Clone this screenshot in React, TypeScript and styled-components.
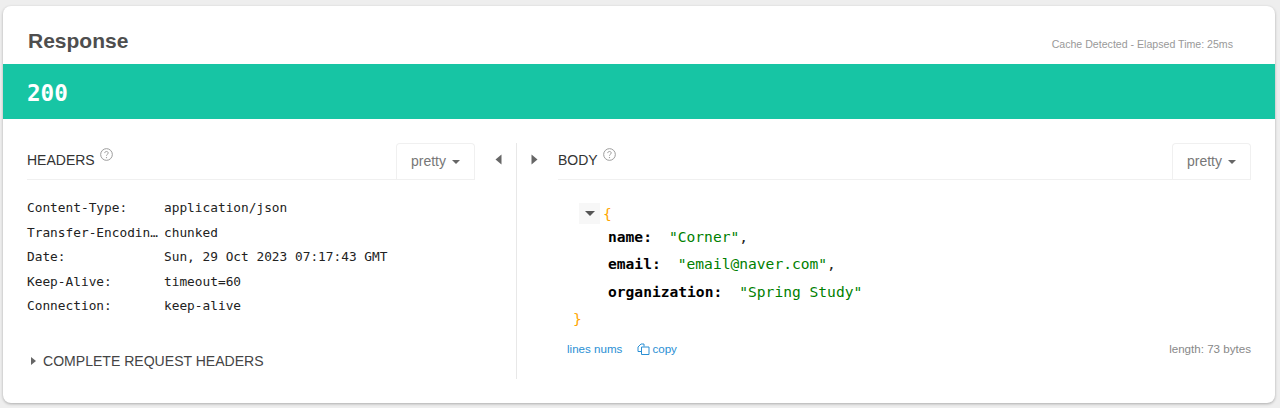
import { Fragment } from 'react'
import styled, { createGlobalStyle } from 'styled-components'

const mono = '"DejaVu Sans Mono", "Liberation Mono", monospace'

const GlobalStyle = createGlobalStyle`
  html, body {
    margin: 0;
    padding: 0;
    background: #eeeeee;
    font-family: "Liberation Sans", Arial, sans-serif;
  }
`

const Page = styled.div`
  width: 1280px;
  height: 408px;
  padding: 6px 5px 5px 3px;
  box-sizing: border-box;
  overflow: hidden;
`

const Card = styled.section`
  height: 397px;
  background: #fff;
  border-radius: 8px;
  box-shadow: 0 1px 3px rgba(0, 0, 0, 0.28);
  overflow: hidden;
`

const CardHeader = styled.header`
  height: 58px;
  display: flex;
  justify-content: space-between;
  padding: 0 42px 0 25px;
`

const Title = styled.h2`
  margin: 23px 0 0;
  font-size: 21px;
  line-height: 24px;
  font-weight: 700;
  color: #4e4e4e;
`

const Elapsed = styled.span`
  margin-top: 31px;
  font-size: 10.6px;
  line-height: 14px;
  color: #999;
`

const StatusBar = styled.div`
  height: 55px;
  display: flex;
  align-items: center;
  padding: 3px 0 0 24px;
  box-sizing: border-box;
  background: #17c5a4;
  color: #fff;
  font-family: ${mono};
  font-size: 22.6px;
  font-weight: 700;
`

const Panels = styled.div`
  display: flex;
  padding-top: 24px;
`

const LeftPanel = styled.div`
  width: 514px;
  height: 236px;
  padding-left: 24px;
  box-sizing: border-box;
  border-right: 1px solid #e8e8e8;
  position: relative;
`

const RightPanel = styled.div`
  width: 693px;
  margin-left: 41px;
  position: relative;
`

const LeftSection = styled.div`
  width: 448px;
`

const SectionHead = styled.div`
  height: 37px;
  display: flex;
  justify-content: space-between;
  box-sizing: border-box;
  border-bottom: 1px solid #f0f0f0;
`

const SectionLabel = styled.div`
  display: flex;
  align-items: flex-start;
  gap: 5px;
  padding-top: 9px;
  font-size: 14px;
  line-height: 16px;
  color: #333;
`

const HelpIcon = styled.svg`
  width: 13px;
  height: 13px;
  margin-top: -4px;
`

const FormatButton = styled.div`
  width: 79px;
  height: 36px;
  display: flex;
  align-items: center;
  justify-content: center;
  gap: 6px;
  padding-bottom: 1px;
  box-sizing: border-box;
  border: 1px solid #f0f0f0;
  border-bottom: none;
  border-radius: 4px 4px 0 0;
  font-size: 14px;
  color: #777;
`

const Caret = styled.i`
  display: block;
  width: 0;
  height: 0;
  margin-top: 2px;
  border-left: 4px solid transparent;
  border-right: 4px solid transparent;
  border-top: 4px solid #666;
`

const HeaderTable = styled.dl`
  margin: 16px 0 0;
  display: grid;
  grid-template-columns: 137px 1fr;
  grid-auto-rows: 24.5px;
  font-family: ${mono};
  font-size: 12.8px;
  line-height: 24.5px;
  color: #222;
`

const HeaderName = styled.dt`
  white-space: nowrap;
`

const HeaderValue = styled.dd`
  margin: 0;
  white-space: nowrap;
`

const CompleteHeaders = styled.div`
  margin-top: 34px;
  display: flex;
  align-items: center;
  gap: 7px;
  padding-left: 4px;
  font-size: 14.05px;
  line-height: 16px;
  color: #444;
`

const ArrowRight = styled.i`
  display: block;
  width: 0;
  height: 0;
  border-top: 4px solid transparent;
  border-bottom: 4px solid transparent;
  border-left: 5px solid #666;
`

const CollapseButton = styled.svg<{ $side: 'left' | 'right' }>`
  position: absolute;
  top: 11px;
  width: 7px;
  height: 11px;
  ${({ $side }) => ($side === 'left' ? 'right: 14px;' : 'left: -27px;')}
`

const JsonBlock = styled.div`
  margin: 24px 0 0 21px;
  font-family: ${mono};
  font-size: 14.6px;
  line-height: 27.3px;
  color: #222;
`

const JsonOpen = styled.div`
  height: 19px;
  display: flex;
  align-items: center;
`

const JsonLine = styled.div<{ $indent?: boolean }>`
  display: flex;
  align-items: center;
  white-space: pre;
  padding-left: ${({ $indent }) => ($indent ? '29px' : '0')};
`

const Toggle = styled.span`
  width: 21px;
  height: 21px;
  margin-right: 3px;
  display: flex;
  align-items: center;
  justify-content: center;
  background: #f7f7f7;
`

const ToggleCaret = styled(Caret)`
  margin: 0;
  border-left-width: 5px;
  border-right-width: 5px;
  border-top-width: 5px;
  border-top-color: #555;
`

const Brace = styled.span<{ $closing?: boolean }>`
  color: #ffa500;
  margin-left: ${({ $closing }) => ($closing ? '-6px' : '0')};
`

const Key = styled.b`
  color: #000;
`

const Str = styled.span`
  margin-left: 17px;
  color: #008000;
`

const BodyFooter = styled.div`
  margin-top: 9px;
  padding-left: 9px;
  display: flex;
  align-items: center;
  font-size: 11.6px;
  line-height: 16px;
  color: #2a8fd4;
`

const CopyLink = styled.span`
  margin-left: 15px;
  display: flex;
  align-items: center;
  gap: 2px;
`

const Length = styled.span`
  margin-left: auto;
  color: #888;
`

const headers = [
  ['Content-Type:', 'application/json'],
  ['Transfer-Encodin…', 'chunked'],
  ['Date:', 'Sun, 29 Oct 2023 07:17:43 GMT'],
  ['Keep-Alive:', 'timeout=60'],
  ['Connection:', 'keep-alive'],
]

const body = [
  ['name', '"Corner"', ','],
  ['email', '"email@naver.com"', ','],
  ['organization', '"Spring Study"', ''],
]

const Help = () => (
  <HelpIcon viewBox="0 0 12 12" fill="none">
    <circle cx="6" cy="6" r="5.4" stroke="#999" strokeWidth="0.9" />
    <path d="M4.4 4.7c0-1 .7-1.5 1.6-1.5s1.6.6 1.6 1.4c0 1.2-1.6 1.2-1.6 2.5" stroke="#999" strokeWidth="0.9" />
    <circle cx="6" cy="8.8" r="0.6" fill="#999" />
  </HelpIcon>
)

const Format = () => (
  <FormatButton>
    pretty <Caret />
  </FormatButton>
)

export default function App() {
  return (
    <Page>
      <GlobalStyle />
      <Card>
        <CardHeader>
          <Title>Response</Title>
          <Elapsed>Cache Detected - Elapsed Time: 25ms</Elapsed>
        </CardHeader>
        <StatusBar>200</StatusBar>
        <Panels>
          <LeftPanel>
            <LeftSection>
              <SectionHead>
                <SectionLabel>
                  HEADERS <Help />
                </SectionLabel>
                <Format />
              </SectionHead>
              <HeaderTable>
                {headers.map(([name, value]) => (
                  <Fragment key={name}>
                    <HeaderName>{name}</HeaderName>
                    <HeaderValue>{value}</HeaderValue>
                  </Fragment>
                ))}
              </HeaderTable>
              <CompleteHeaders>
                <ArrowRight />
                COMPLETE REQUEST HEADERS
              </CompleteHeaders>
            </LeftSection>
            <CollapseButton $side="left" viewBox="0 0 7 11">
              <path d="M6.5 0.5v10L0.5 5.5z" fill="#666" />
            </CollapseButton>
          </LeftPanel>
          <RightPanel>
            <CollapseButton $side="right" viewBox="0 0 7 11">
              <path d="M0.5 0.5v10l6-5z" fill="#666" />
            </CollapseButton>
            <SectionHead>
              <SectionLabel>
                BODY <Help />
              </SectionLabel>
              <Format />
            </SectionHead>
            <JsonBlock>
              <JsonOpen>
                <Toggle>
                  <ToggleCaret />
                </Toggle>
                <Brace>{'{'}</Brace>
              </JsonOpen>
              {body.map(([key, value, comma]) => (
                <JsonLine $indent key={key}>
                  <Key>{key}:</Key>
                  <Str>{value}</Str>
                  {comma}
                </JsonLine>
              ))}
              <JsonLine>
                <Brace $closing>{'}'}</Brace>
              </JsonLine>
            </JsonBlock>
            <BodyFooter>
              lines nums
              <CopyLink>
                <svg width="13" height="12" viewBox="0 0 13 12" fill="none" stroke="#2a8fd4" strokeWidth="1">
                  <path d="M4 8.5H1V4l3-3h3v2.5" />
                  <path d="M4.5 4h7.5v7.5H4.5z" />
                </svg>
                copy
              </CopyLink>
              <Length>length: 73 bytes</Length>
            </BodyFooter>
          </RightPanel>
        </Panels>
      </Card>
    </Page>
  )
}
